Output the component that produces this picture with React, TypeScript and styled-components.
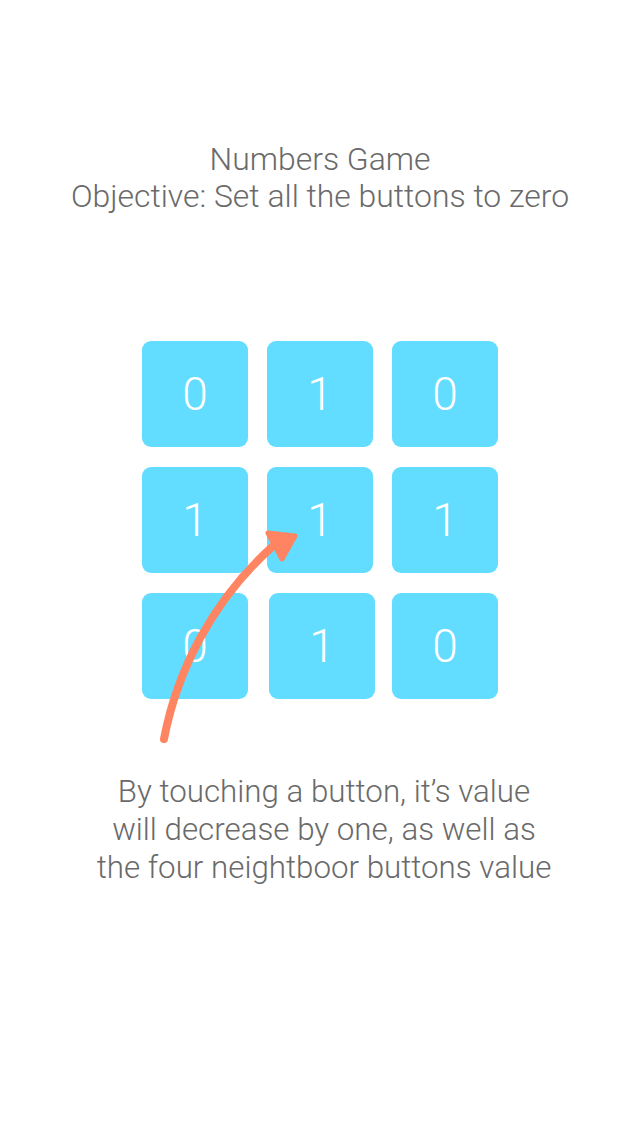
import React from "react";
import styled, { createGlobalStyle } from "styled-components";

const Global = createGlobalStyle`
  html, body { margin: 0; padding: 0; background: #ffffff; }
  body { font-family: Roboto, "Liberation Sans", sans-serif; }
`;

const Page = styled.div`
  width: 640px;
  min-height: 1136px;
  display: flex;
  flex-direction: column;
  align-items: center;
  box-sizing: border-box;
  padding-top: 141px;
`;

const Heading = styled.h1`
  margin: 0;
  font-family: Roboto, "Liberation Sans", sans-serif;
  font-weight: 300;
  font-size: 31.9px;
  line-height: 37px;
  color: #6a6a6a;
  text-align: center;
`;

const Stage = styled.div`
  position: relative;
  margin-top: 126px;
`;

const Grid = styled.div`
  display: grid;
  grid-template-columns: repeat(3, 106px);
  grid-auto-rows: 106px;
  column-gap: 19px;
  row-gap: 20px;
`;

const Cell = styled.button<{ $shift?: number }>`
  border: none;
  padding: 0;
  margin-left: ${(p) => p.$shift ?? 0}px;
  width: 106px;
  height: 106px;
  border-radius: 9px;
  background: #62ddff;
  color: #ffffff;
  font-family: Roboto, "Liberation Sans", sans-serif;
  font-weight: 300;
  font-size: 46px;
  display: flex;
  align-items: center;
  justify-content: center;
  cursor: pointer;
`;

const ArrowLayer = styled.svg`
  position: absolute;
  left: 0;
  top: 0;
  width: 356px;
  height: 420px;
  overflow: visible;
  pointer-events: none;
`;

const Hint = styled.p`
  margin: 74px 0 0;
  padding-left: 8px;
  font-family: Roboto, "Liberation Sans", sans-serif;
  font-weight: 300;
  font-size: 31.3px;
  line-height: 38px;
  color: #6a6a6a;
  text-align: center;
`;

const values = [0, 1, 0, 1, 1, 1, 0, 1, 0];

export default function App() {
  return (
    <>
      <Global />
      <Page>
        <Heading>
          Numbers Game
          <br />
          Objective: Set all the buttons to zero
        </Heading>
        <Stage>
          <Grid>
            {values.map((v, i) => (
              <Cell key={i} $shift={i === 7 ? 2 : 0}>
                {v}
              </Cell>
            ))}
          </Grid>
          <ArrowLayer viewBox="0 0 356 420">
            <path
              d="M 22 398 C 35 330, 70 260, 130 206"
              fill="none"
              stroke="#ff8562"
              strokeWidth={8}
              strokeLinecap="round"
            />
            <polygon
              points="126,192 153,195 140,218"
              fill="#ff8562"
              stroke="#ff8562"
              strokeWidth={5}
              strokeLinejoin="round"
            />
          </ArrowLayer>
        </Stage>
        <Hint>
          By touching a button, it’s value
          <br />
          will decrease by one, as well as
          <br />
          the four neightboor buttons value
        </Hint>
      </Page>
    </>
  );
}
